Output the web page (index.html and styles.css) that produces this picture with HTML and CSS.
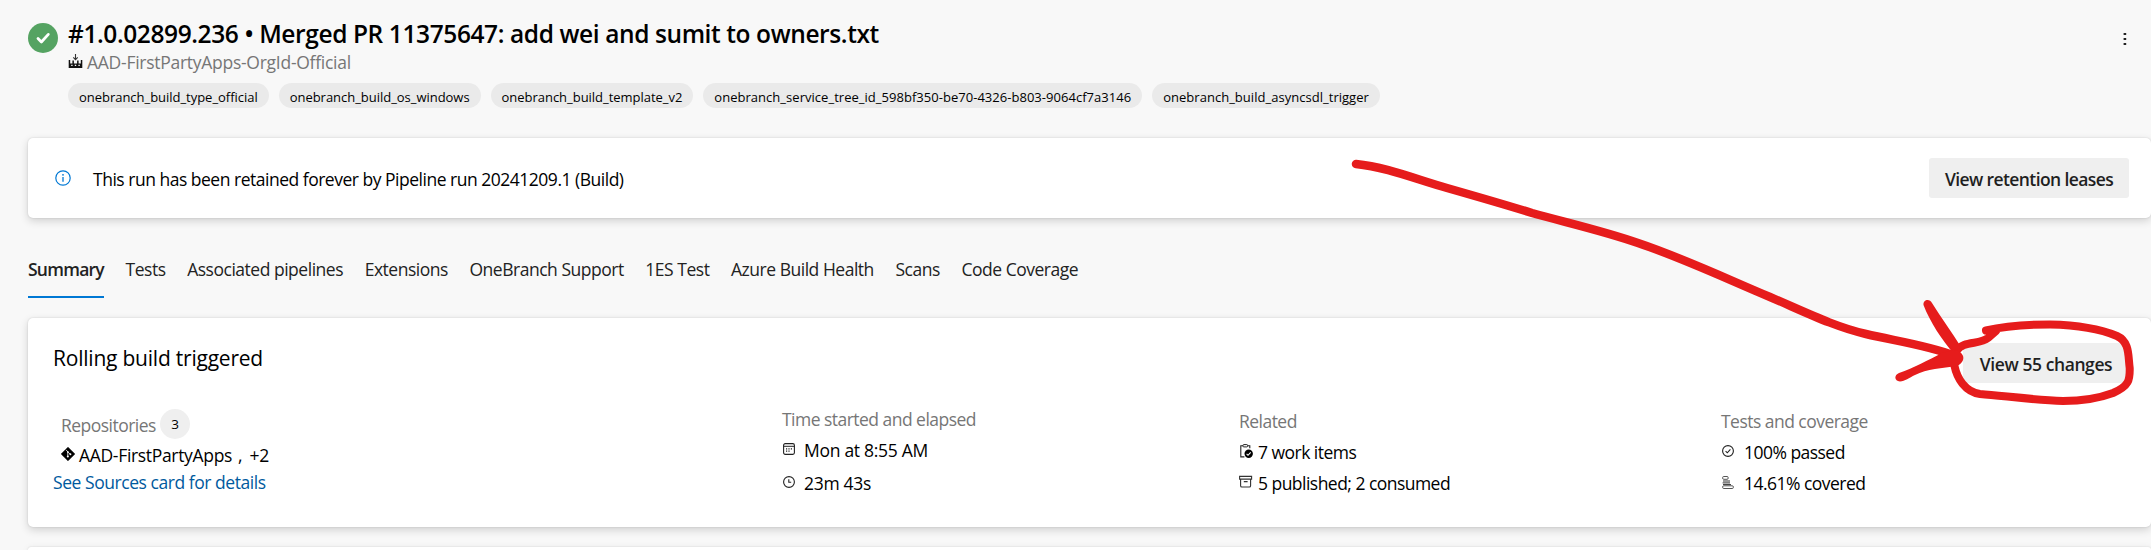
FILE: index.html
```
<!DOCTYPE html>
<html lang="en">
<head>
<meta charset="utf-8">
<title>Pipeline run summary</title>
<link rel="stylesheet" href="styles.css">
</head>
<body>
<header class="run-header">
  <svg class="status" viewBox="0 0 30 30"><circle cx="15" cy="15" r="15" fill="#55a362"/><path d="M10 15.6l3.4 3.4 6.9-7.6" fill="none" stroke="#fff" stroke-width="2.8" stroke-linecap="round" stroke-linejoin="round"/></svg>
  <div class="run-info">
    <h1 class="run-title">#1.0.02899.236 • Merged PR 11375647: add wei and sumit to owners.txt</h1>
    <div class="run-pipeline">
      <svg class="factory" viewBox="0 0 15 15"><path d="M.7 6h1.5v3.4h2.2V6.6h1.5v2.8h3.2V6.6h1.5v2.8h2.2V6h1.5v8H.7z" fill="#111"/><path d="M7.5 0v5.6M5.3 3.4l2.2 2.3 2.2-2.3" fill="none" stroke="#333" stroke-width="1.1"/><path d="M3.2 10.8h1.4v1.2H3.2zM6.8 10.8h1.4v1.2H6.8zM10.4 10.8h1.4v1.2h-1.4z" fill="#f8f8f8"/></svg>
      <span>AAD-FirstPartyApps-OrgId-Official</span>
    </div>
    <ul class="tags">
      <li class="tag">onebranch_build_type_official</li>
      <li class="tag">onebranch_build_os_windows</li>
      <li class="tag">onebranch_build_template_v2</li>
      <li class="tag tag-wide">onebranch_service_tree_id_598bf350-be70-4326-b803-9064cf7a3146</li>
      <li class="tag tag-wide">onebranch_build_asyncsdl_trigger</li>
    </ul>
  </div>
  <svg class="more" viewBox="0 0 4 14"><path d="M.6 1h2.6v2H.6zM.6 6h2.6v2H.6zM.6 11h2.6v2H.6z" fill="#222"/></svg>
</header>

<section class="card notice">
  <svg class="info" viewBox="0 0 16 16"><circle cx="8" cy="8" r="7.2" fill="none" stroke="#0078d4" stroke-width="1.2"/><path d="M8 7v4.8" stroke="#0078d4" stroke-width="1.3"/><circle cx="8" cy="4.8" r=".9" fill="#0078d4"/></svg>
  <p class="notice-text">This run has been retained forever by Pipeline run 20241209.1 (Build)</p>
  <button class="btn btn-leases">View retention leases</button>
</section>

<nav class="tabs">
  <a class="tab active">Summary</a>
  <a class="tab">Tests</a>
  <a class="tab">Associated pipelines</a>
  <a class="tab">Extensions</a>
  <a class="tab">OneBranch Support</a>
  <a class="tab">1ES Test</a>
  <a class="tab">Azure Build Health</a>
  <a class="tab">Scans</a>
  <a class="tab">Code Coverage</a>
</nav>

<section class="card summary">
  <div class="summary-head">
    <h2 class="summary-title">Rolling build triggered</h2>
    <button class="btn btn-changes">View 55 changes</button>
  </div>
  <div class="facts">
    <div class="fact repos">
      <div class="repos-head"><span class="label">Repositories</span><span class="count">3</span></div>
      <div class="line repo-line">
        <svg class="git" viewBox="0 0 14 14"><path d="M7 .2L13.8 7 7 13.8.2 7z" fill="#000" stroke="#000" stroke-width=".6" stroke-linejoin="round"/><path d="M5 2.9l1.8 1.8v5M6.8 4.9L9.4 7.3" fill="none" stroke="#fff" stroke-width=".8"/><circle cx="6.8" cy="4.9" r=".8" fill="#fff"/><circle cx="6.8" cy="9.6" r="1" fill="#fff"/><circle cx="9.4" cy="7.3" r="1" fill="#fff"/></svg>
        <span class="repo-name">AAD-FirstPartyApps</span><span class="comma">,</span><span>+2</span>
      </div>
      <a class="sources">See Sources card for details</a>
    </div>
    <div class="fact time">
      <div class="label">Time started and elapsed</div>
      <div class="line"><svg class="ico" viewBox="0 0 12 12"><rect x=".6" y=".6" width="10.8" height="10.8" rx="1.6" fill="none" stroke="#222" stroke-width="1.1"/><path d="M.6 3.3h10.8" stroke="#222" stroke-width="1"/><path d="M3 5.8h1.2M5.4 5.8h1.2M7.8 5.8H9M3 8.2h1.2M5.4 8.2h1.2" stroke="#222" stroke-width="1.2"/></svg><span class="even">Mon at 8:55 AM</span></div>
      <div class="line"><svg class="ico" viewBox="0 0 12 12"><circle cx="6" cy="6" r="5.4" fill="none" stroke="#222" stroke-width="1.1"/><path d="M5.8 3.2v3.1h2.4" fill="none" stroke="#222" stroke-width="1.1"/></svg><span class="even">23m 43s</span></div>
    </div>
    <div class="fact related">
      <div class="label">Related</div>
      <div class="line"><svg class="ico-lg" viewBox="0 0 14 14"><path d="M4 1.7H1.8v11.2h3.6M8.6 1.7h2.2v2.6" fill="none" stroke="#222" stroke-width="1.1"/><rect x="4" y=".6" width="4.6" height="2.3" rx=".8" fill="none" stroke="#222"/><circle cx="9.7" cy="9.7" r="4.2" fill="#000"/><path d="M7.6 9.9l1.4 1.4 2.7-2.9" fill="none" stroke="#fff" stroke-width="1.1"/></svg><span>7 work items</span></div>
      <div class="line"><svg class="ico-lg" viewBox="0 0 14 14"><path d="M.6 1.4h12v2.7H.6zM1.6 4.1v6.6q0 1.3 1.3 1.3h7.4q1.3 0 1.3-1.3V4.1M4.8 6.6h3.8" fill="none" stroke="#333" stroke-width="1.1"/></svg><span>5 published; 2 consumed</span></div>
    </div>
    <div class="fact tests">
      <div class="label">Tests and coverage</div>
      <div class="line"><svg class="ico" viewBox="0 0 12 12"><circle cx="6" cy="6" r="5.4" fill="none" stroke="#222" stroke-width="1.1"/><path d="M3.6 6.1l1.7 1.7 3.1-3.4" fill="none" stroke="#222" stroke-width="1.1"/></svg><span>100% passed</span></div>
      <div class="line"><svg class="ico ico-bars" viewBox="0 0 12 13"><rect x=".6" y=".5" width="5.6" height="2.8" rx="1.2" fill="none" stroke="#555"/><path d="M1 5h7M.6 6.9h7.4M1 8.6h8" stroke="#333" stroke-width="1"/><rect x=".6" y="9.8" width="10.8" height="2.7" rx="1.2" fill="none" stroke="#555"/></svg><span>14.61% covered</span></div>
    </div>
  </div>
</section>

<section class="card next"></section>

<svg class="markup" viewBox="0 0 2151 550">
  <g fill="none" stroke="#e61c1c" stroke-linecap="round" stroke-linejoin="round">
    <path stroke-width="8.5" d="M1356 164C1387 167 1418 180 1447 188C1475 196 1503 204 1532 213C1568 223 1604 231 1638 243C1683 258 1727 279 1770 297C1805 312 1835 327 1866 334C1896 341 1927 345 1956 356"/>
    <path stroke-width="8" d="M1986 330.5C2005 326 2028 324.5 2050 324.5C2075 325 2098 328 2117 336C2130 342 2128 356 2129.7 368C2130 380 2129 386 2113 393C2097 399 2080 401 2063 401C2034 400 2005 396 1980 394C1965 392 1957 378 1954.5 366C1953 356 1956 348 1964 345C1972 342 1982 343 1988 338L1996 331"/>
  </g>
  <g fill="#e61c1c">
    <path d="M1923.5 305C1923 299 1930 298.5 1932 303C1941 318 1952 332 1961 347L1954 354C1942 340 1930 322 1923.5 305z"/>
    <path d="M1899 373C1914 368 1928 360 1942 353L1954 350C1966 352 1966 362 1957 366C1942 368 1927 369 1915 375C1909 378 1905 381 1900 381.5C1894 381 1894 375 1899 373z"/>
  </g>
</svg>
</body>
</html>
```
FILE: styles.css
```
* { box-sizing: border-box; }
body {
  position: relative;
  width: 2151px;
  height: 550px;
  margin: 0;
  padding: 16px 0 0 28px;
  overflow: hidden;
  background: #f8f8f8;
  color: #000;
  font: 17.5px/24px "Open Sans", "Noto Sans", sans-serif;
  letter-spacing: -0.53px;
}
h1, h2, p, ul { margin: 0; padding: 0; font-weight: 400; }
svg { display: block; flex: none; }

.run-header { display: flex; height: 122px; }
.status { width: 30px; height: 30px; margin-top: 7px; }
.run-info { flex: 1; padding-left: 10px; }
.run-title { height: 34px; padding-top: 1px; font-size: 24.5px; line-height: 34px; font-weight: 600; letter-spacing: -0.4px; }
.run-pipeline { display: flex; gap: 4px; color: #767676; letter-spacing: -0.27px; }
.factory { width: 15px; height: 15px; margin-top: 4px; }
.tags { display: flex; gap: 10px; margin-top: 9px; list-style: none; }
.tag {
  height: 25px;
  padding: 2px 11px 0;
  border-radius: 12.5px;
  background: #eaeaea;
  font-size: 13px;
  line-height: 25px;
  letter-spacing: -0.03px;
}
.tag-wide { letter-spacing: 0.03px; }
.more { width: 4px; height: 14px; margin: 16px 24px 0 0; }

.card {
  border-radius: 5px;
  background: #fff;
  box-shadow: 0 3px 8px rgba(0, 0, 0, .16), 0 0 2px rgba(0, 0, 0, .14);
}
.notice { display: flex; align-items: center; height: 80px; padding: 0 22px 0 27px; }
.info { width: 16px; height: 16px; }
.notice-text { flex: 1; padding: 2px 0 0 22px; letter-spacing: -0.49px; }
.btn {
  height: 40px;
  padding: 2px 0 0;
  border: 0;
  border-radius: 3px;
  background: #efefef;
  color: #1f1f1f;
  font: 600 17.5px/24px "Open Sans", "Noto Sans", sans-serif;
}
.btn-leases { width: 200px; letter-spacing: -0.6px; }
.btn-changes { width: 166px; letter-spacing: -0.42px; }

.tabs { display: flex; gap: 21.6px; height: 80px; margin-bottom: 20px; letter-spacing: -0.48px; color: #222; }
.tab { padding-top: 39px; border-bottom: 2px solid transparent; }
.tab.active { border-color: #0078d4; font-weight: 600; letter-spacing: -0.75px; }

.summary { height: 209px; padding: 25px 22px 0 25px; }
.summary-head { display: flex; justify-content: space-between; height: 40px; }
.summary-title { font-size: 21px; line-height: 30px; letter-spacing: -0.22px; }
.facts { display: grid; grid-template-columns: 729px 457px 482px 1fr; padding-top: 24px; }
.label { height: 24px; color: #767676; }
.line { display: flex; height: 24px; }
.repos { padding-top: 2px; }
.repos-head { display: flex; align-items: center; height: 30px; padding-left: 8px; gap: 4px; }
.repos-head .label { padding-top: 1px; }
.count {
  width: 30px;
  height: 30px;
  border-radius: 50%;
  background: #efefef;
  font-size: 13.5px;
  line-height: 31px;
  text-align: center;
}
.repo-line { margin-top: 4px; padding-left: 8px; letter-spacing: -0.2px; }
.git { width: 14px; height: 14px; margin: 4px 4px 0 0; }
.repo-name { letter-spacing: -0.32px; }
.comma { margin: 0 7px 0 6px; }
.sources { display: block; margin-top: 3px; color: #005a9e; letter-spacing: -0.45px; }
.time .line { margin-top: 7px; gap: 9px; }
.time .line + .line { margin-top: 9px; }
.line .even { letter-spacing: -0.29px; }
.related, .tests { padding-top: 2px; }
.related .line, .tests .line { margin-top: 7px; gap: 5px; }
.tests .line { gap: 10px; }
.ico { width: 12px; height: 12px; margin: 5px 0 0 1px; }
.ico-bars { height: 13px; }
.ico-lg { width: 14px; height: 14px; margin-top: 4px; }

.next { height: 3px; margin-top: 20px; border-radius: 5px 5px 0 0; }

.markup { position: absolute; top: 0; left: 0; width: 2151px; height: 550px; pointer-events: none; }
```
